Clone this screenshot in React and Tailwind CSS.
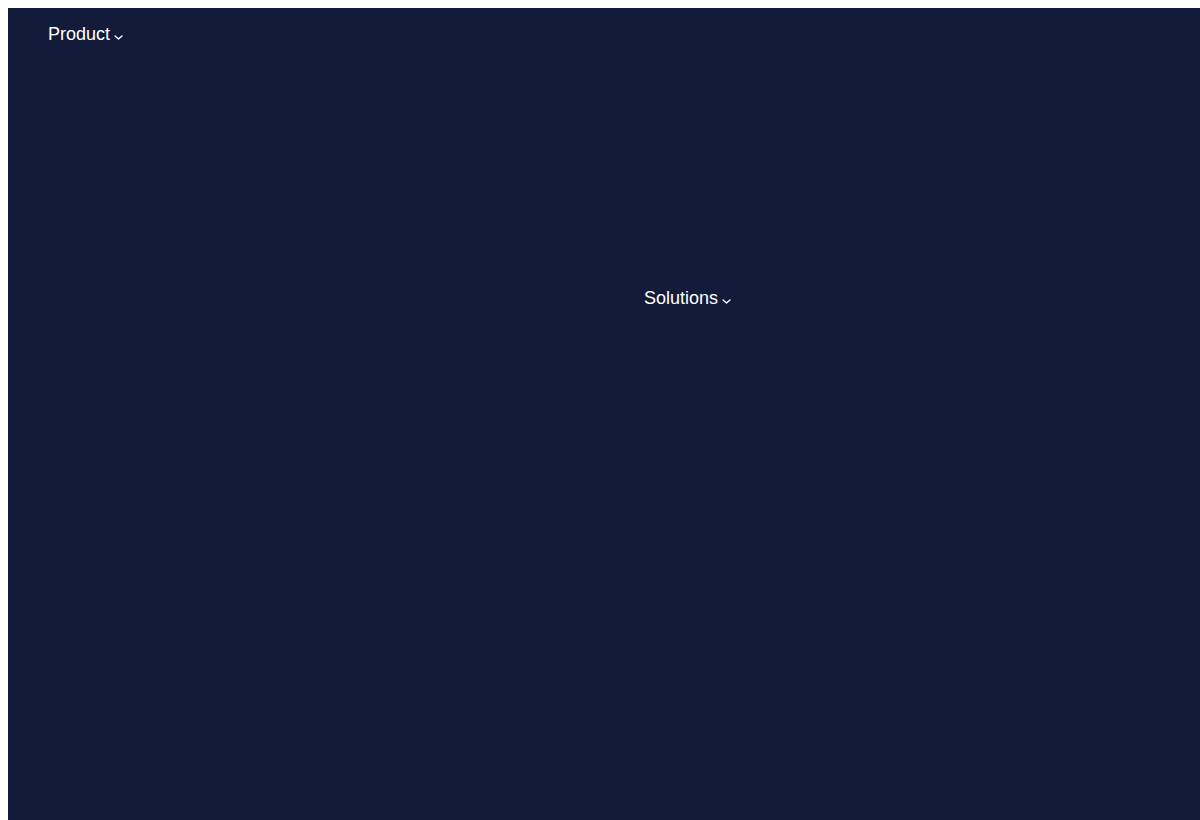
import React from "react";

function Chevron() {
  return (
    <svg width="9" height="5" viewBox="0 0 9 5" className="mt-[6px] ml-[4px]" fill="none">
      <path d="M1 1 L4.5 4 L8 1" stroke="#ffffff" strokeWidth="1.4" strokeLinecap="round" strokeLinejoin="round" />
    </svg>
  );
}

function NavItem({ label }) {
  return (
    <button className="flex items-center text-white text-[18px] leading-[28px] bg-transparent cursor-pointer" style={{ fontFamily: '"Liberation Sans", Arial, sans-serif' }}>
      <span>{label}</span>
      <Chevron />
    </button>
  );
}

export default function App() {
  return (
    <div className="bg-white pt-2 pl-2 w-[1200px] h-[820px] overflow-hidden">
      <div className="bg-[#121c3a] w-full h-[812px] flex flex-col items-start pl-[40px] pt-[12px]" style={{ fontFamily: '"Liberation Sans", Arial, sans-serif' }}>
        <NavItem label="Product" />
        <div className="mt-[236px] ml-[596px]">
          <NavItem label="Solutions" />
        </div>
      </div>
    </div>
  );
}
